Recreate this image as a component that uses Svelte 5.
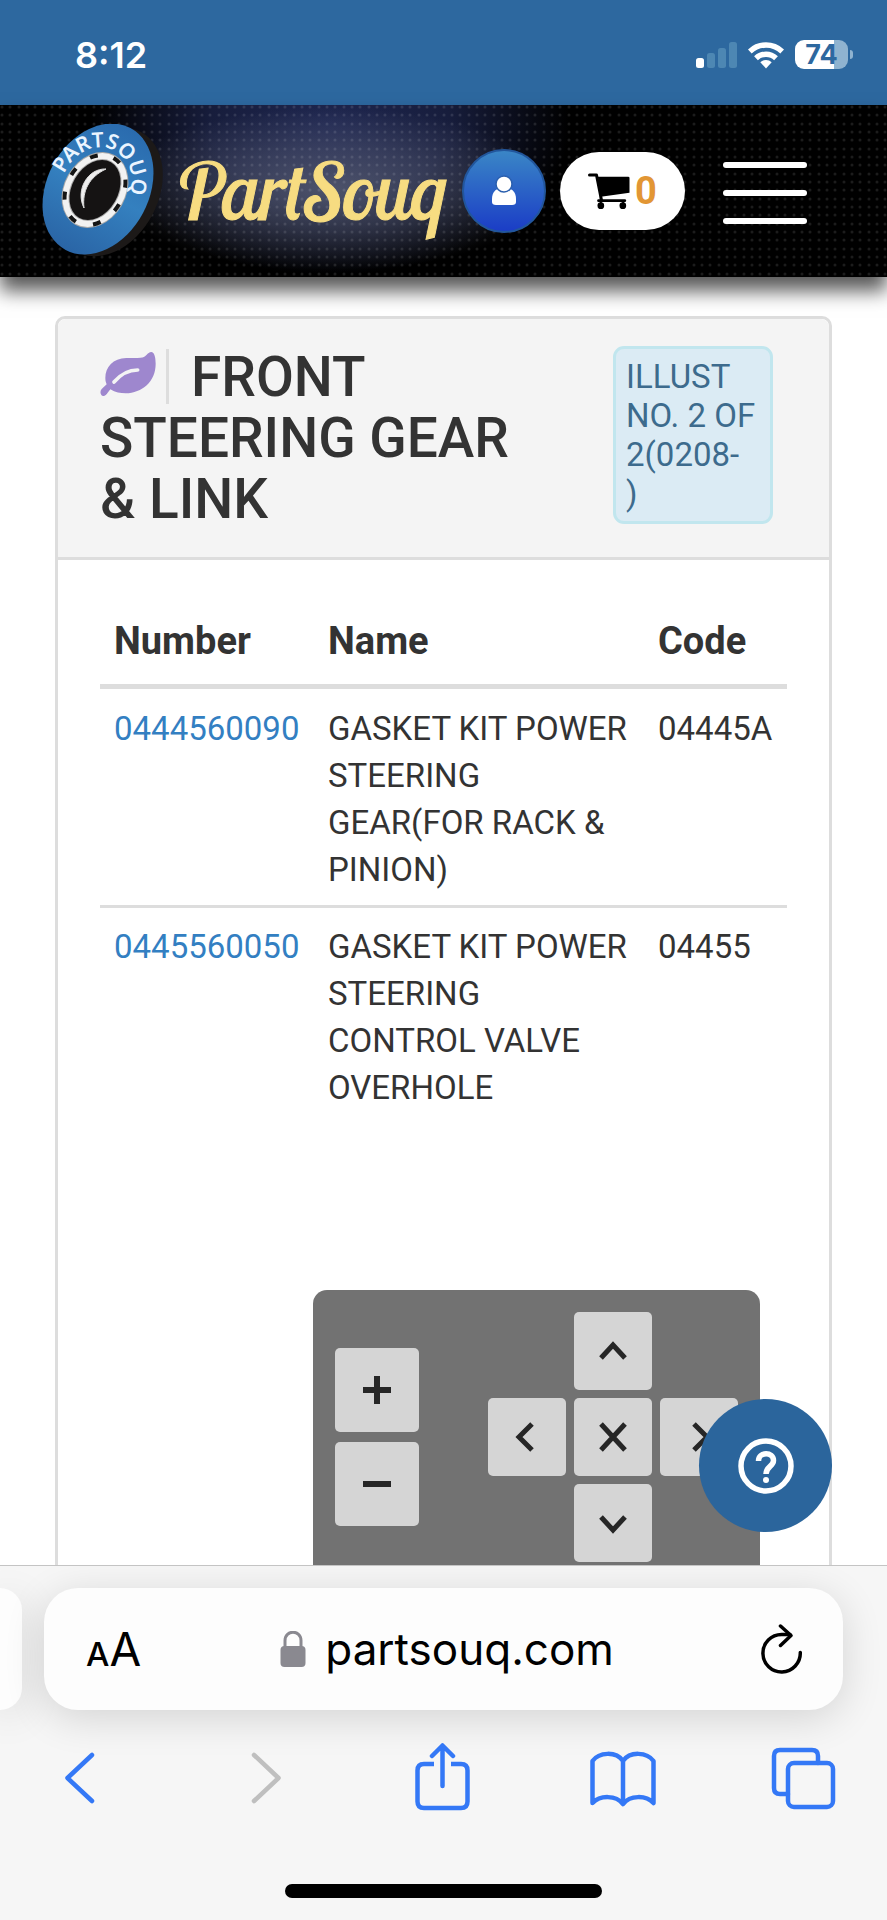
<script>
  const parts = [
    { number: '0444560090', name: 'GASKET KIT POWER STEERING GEAR(FOR RACK & PINION)', code: '04445A' },
    { number: '0445560050', name: 'GASKET KIT POWER STEERING CONTROL VALVE OVERHOLE', code: '04455' }
  ];
  const steps = [4, 12, 21];
</script>

<div class="screen">
  <div class="status">
    <span class="time">8:12</span>
    <div class="indicators">
      <svg width="41" height="26" viewBox="0 0 41 26" aria-hidden="true">
        <rect x="0" y="16" width="8" height="10" rx="2.5" fill="#fff" />
        <g fill="#4d87b3">
          <rect x="11" y="11" width="8" height="15" rx="2.5" />
          <rect x="22" y="6" width="8" height="20" rx="2.5" />
          <rect x="33" y="0" width="8" height="26" rx="2.5" />
        </g>
      </svg>
      <svg width="36" height="28" viewBox="0 0 36 28" aria-hidden="true">
        <g fill="none" stroke="#fff" stroke-width="5.5">
          <path d="M1.8 10.5A23.5 23.5 0 0 1 34.2 10.5" />
          <path d="M8 17.2A14.5 14.5 0 0 1 28 17.2" />
        </g>
        <path d="M12.3 21.2A8.5 8.5 0 0 1 23.7 21.2L18 27.4Z" fill="#fff" />
      </svg>
      <div class="battery"><span class="level">74</span><span class="tip"></span></div>
    </div>
  </div>

  <header class="site">
    <svg class="dots" aria-hidden="true">
      <defs>
        <pattern id="mesh" width="25" height="25" patternUnits="userSpaceOnUse">
          {#each steps as y}
            {#each steps as x}
              <circle cx={x - 2} cy={y - 2} r="1.5" fill="#fff" fill-opacity="0.11" />
            {/each}
          {/each}
        </pattern>
      </defs>
      <rect width="100%" height="100%" fill="url(#mesh)" />
    </svg>
    <a class="brand" href="#home">
      <svg width="124" height="134" viewBox="0 0 124 134" aria-hidden="true">
        <defs>
          <linearGradient id="disc" x1="0" y1="0" x2="1" y2="0">
            <stop offset="0" stop-color="#2a65a6" />
            <stop offset="0.5" stop-color="#3480bf" />
            <stop offset="1" stop-color="#2a6bae" />
          </linearGradient>
          <path id="rim" d="M22 50C34 25 58 17 74 28C91 39 93 56 85 78" />
        </defs>
        <ellipse cx="67" cy="68" rx="68" ry="49" transform="rotate(-62 67 68)" fill="#1c1918" />
        <ellipse cx="56" cy="65" rx="69" ry="51" transform="rotate(-62 56 65)" fill="url(#disc)" />
        <ellipse cx="53" cy="66" rx="40" ry="31" transform="rotate(-60 53 66)" fill="#a9a9a9" />
        <ellipse cx="53" cy="66" rx="36" ry="27" transform="rotate(-60 53 66)" fill="none" stroke="#f2f2f2" stroke-width="6" />
        <ellipse cx="53" cy="66" rx="37" ry="28" transform="rotate(-60 53 66)" fill="none" stroke="#151515" stroke-width="4" stroke-dasharray="8 17.8" />
        <ellipse cx="53" cy="66" rx="32" ry="23" transform="rotate(-60 53 66)" fill="#151313" />
        <path d="M64 45C46 44 33 66 42 84C40 67 47 53 64 45Z" fill="#eee" stroke="#ddd" stroke-width="1" />
        <text class="rimtext"><textPath href="#rim">PARTSOUQ</textPath></text>
      </svg>
      <span class="wordmark">PartSouq</span>
    </a>
    <nav class="actions">
      <button class="user" aria-label="Account">
        <svg width="26" height="32" viewBox="0 0 26 32" aria-hidden="true">
          <path d="M1 24C1 17 5 14 8 14H18C21 14 25 17 25 24V27Q25 30 21 30H5Q1 30 1 27Z" fill="#fff" />
          <circle cx="13" cy="9" r="8" fill="#fff" stroke="#2a5fae" stroke-width="1.5" />
        </svg>
      </button>
      <button class="cart" aria-label="Cart">
        <svg width="42" height="36" viewBox="0 0 125 108" aria-hidden="true">
          <path d="M4 6H25L40 82" fill="none" stroke="#000" stroke-width="9" stroke-linecap="round" stroke-linejoin="round" />
          <path d="M29 11H120Q124 11 124 15V59L38 71Z" />
          <path d="M31 83H110" stroke="#000" stroke-width="8" stroke-linecap="round" />
          <path d="M38 68V98M105 83V98" stroke="#000" stroke-width="6" />
          <circle cx="38" cy="98" r="10" />
          <circle cx="104" cy="98" r="10" />
        </svg>
        <span>0</span>
      </button>
      <button class="menu" aria-label="Menu"><i></i><i></i><i></i></button>
    </nav>
  </header>

  <main>
    <section class="card">
      <div class="cardhead">
        <h1><svg class="leaf" width="56" height="44" viewBox="0 0 166 132" aria-hidden="true"><path d="M145 3C135 9 137 18 112 18H78C38 19 15 45 15 78C15 88 17 92 19 97L4 111C-2 118 0 128 6 131C12 134 18 128 22 122L30 112C45 122 60 124 76 124C125 122 166 90 166 35C166 15 162 5 158 2C155 -1 149 0 145 3Z" fill="#9e87ce" /><path d="M41 90C60 68 80 54 112 54" fill="none" stroke="#f4f4f4" stroke-width="11" stroke-linecap="round" /></svg><span class="bar"></span>FRONT STEERING GEAR &amp; LINK</h1>
        <div class="illust">ILLUST NO. 2 OF 2(0208-<br />)</div>
      </div>
      <div class="cardbody">
        <table>
          <thead>
            <tr><th class="num">Number</th><th>Name</th><th class="code">Code</th></tr>
          </thead>
          <tbody>
            {#each parts as part}
              <tr>
                <td><a href="#{part.number}">{part.number}</a></td>
                <td>{part.name}</td>
                <td>{part.code}</td>
              </tr>
            {/each}
          </tbody>
        </table>
        <div class="viewer">
          <div class="zoom">
            <button aria-label="Zoom in"><svg width="30" height="30" viewBox="0 0 30 30"><path d="M15 1V29M1 15H29" /></svg></button>
            <button aria-label="Zoom out"><svg width="30" height="30" viewBox="0 0 30 30"><path d="M1 15H29" /></svg></button>
          </div>
          <div class="pad">
            <button class="up" aria-label="Up"><svg width="30" height="30" viewBox="0 0 30 30"><path d="M3 22L15 9L27 22" /></svg></button>
            <button class="left" aria-label="Left"><svg width="30" height="30" viewBox="0 0 30 30"><path d="M20 2L7 15L20 28" /></svg></button>
            <button class="reset" aria-label="Reset"><svg width="30" height="30" viewBox="0 0 30 30"><path d="M3 2L27 28M27 2L3 28" /></svg></button>
            <button class="right" aria-label="Right"><svg width="30" height="30" viewBox="0 0 30 30"><path d="M10 2L23 15L10 28" /></svg></button>
            <button class="down" aria-label="Down"><svg width="30" height="30" viewBox="0 0 30 30"><path d="M3 9L15 22L27 9" /></svg></button>
          </div>
        </div>
      </div>
    </section>
    <button class="help" aria-label="Help">
      <svg width="56" height="56" viewBox="0 0 56 56" fill="none" stroke="#fff">
        <circle cx="28" cy="28" r="25" stroke-width="5.5" />
        <path d="M20.5 23C20.5 13.500 35.500 13.500 35.500 22.500C35.500 28.500 28 28.500 28 36" stroke-width="5.500" />
        <circle cx="28" cy="42" r="3" fill="#fff" stroke="none" />
      </svg>
    </button>
  </main>

  <footer>
    <div class="tabs">
      <div class="previous"></div>
      <div class="address">
        <button class="reader" aria-label="Page settings"><small>A</small>A</button>
        <div class="url">
          <svg width="26" height="36" viewBox="0 0 26 36" aria-hidden="true">
            <path d="M5 16V9.500C5 -1.500 21 -1.500 21 9.500V16" fill="none" stroke="#8a8990" stroke-width="3" />
            <rect x="0.500" y="15" width="25" height="21" rx="4" fill="#8a8990" />
          </svg>
          <span>partsouq.com</span>
        </div>
        <button aria-label="Reload">
          <svg width="42" height="50" viewBox="0 0 42 50" fill="none" stroke="#000" stroke-width="3.500" stroke-linecap="round" stroke-linejoin="round">
            <path d="M39.300 28.500A18.700 18.700 0 1 1 20.600 10.500H29" />
            <path d="M19.500 2L30 11.500L19.500 21.500" />
          </svg>
        </button>
      </div>
    </div>
    <nav class="toolbar">
      <button aria-label="Back"><svg viewBox="0 0 66 68"><path d="M46 12L21.500 35L46 58" /></svg></button>
      <button class="off" aria-label="Forward" disabled><svg viewBox="0 0 66 68"><path d="M27 12L51.500 35L27 58" /></svg></button>
      <button aria-label="Share"><svg viewBox="0 0 66 68"><path d="M25 21H15Q8.500 21 8.500 27.500V58.500Q8.500 65 15 65H52Q58.500 65 58.500 58.500V27.500Q58.500 21 52 21H42" stroke-linecap="butt" /><path d="M33.500 43V3M23 13L33.500 2.500L44 13" /></svg></button>
      <button aria-label="Bookmarks"><svg viewBox="0 0 66 68"><path d="M33 61V18C26 8 9 9 2.500 18V60C10 52 26 52 33 61C40 52 56 52 63.500 60V18C57 9 40 8 33 18" /></svg></button>
      <button aria-label="Tabs"><svg viewBox="0 0 66 68"><rect x="17" y="20" width="45" height="44" rx="6" /><path d="M17 51H9Q3 51 3 45V13Q3 7 9 7H41Q47 7 47 13V20" /></svg></button>
    </nav>
    <div class="home"></div>
  </footer>
</div>

<style>
  :global(body) { margin: 0; background: #fff; }
  * { box-sizing: border-box; }
  button { border: 0; padding: 0; margin: 0; background: none; font: inherit; color: inherit; display: flex; align-items: center; justify-content: center; }
  svg { display: block; flex: none; }
  a { text-decoration: none; }

  .screen { height: 100vh; display: flex; flex-direction: column; overflow: hidden; font-family: Roboto, sans-serif; color: #333; }

  .status { flex: none; height: 105px; padding: 4px 34px 0 75px; background: #2d689f; color: #fff; display: flex; align-items: center; justify-content: space-between; font-family: Inter, sans-serif; }
  .time { font-size: 36px; font-weight: 600; }
  .indicators { display: flex; align-items: center; gap: 11px; }
  .battery { position: relative; width: 53px; height: 29px; margin-right: 5px; border-radius: 9px; background: linear-gradient(90deg, #fff 74%, #8fb3d0 74%); color: #2d689f; display: flex; align-items: center; justify-content: center; }
  .level { font-size: 27px; font-weight: 700; line-height: 29px; }
  .tip { position: absolute; left: 55px; top: 10px; width: 3px; height: 9px; border-radius: 0 4px 4px 0; background: #8fb3d0; }

  .site { position: relative; z-index: 2; flex: none; height: 172px; padding: 0 80px 0 42px; display: flex; align-items: center; justify-content: space-between;
    background: radial-gradient(ellipse 220px 82px at 330px 84px, rgba(120, 125, 142, 0.55), rgba(105, 110, 132, 0.36) 50%, transparent), radial-gradient(ellipse 240px 150px at 330px 20px, #1e2650, #171d3c 50%, #000);
    box-shadow: 0 14px 18px rgba(0, 0, 0, 0.65); }
  .dots { position: absolute; inset: 0; width: 100%; height: 100%; }
  .brand { position: relative; display: flex; align-items: center; gap: 10px; color: #f7dc81; }
  .rimtext { font: 600 21px "Noto Sans", sans-serif; fill: #eaf4ff; }
  .wordmark { font: italic 78px "Lobster Two", "Lobster", "Liberation Serif", serif; -webkit-text-stroke: 1px #f7dc81; }
  .actions { position: relative; display: flex; align-items: center; gap: 14px; }
  .user { width: 84px; height: 84px; border-radius: 50%; border: 2px solid #22569c; background: linear-gradient(#3a86c6, #1b3dc6); }
  .cart { width: 125px; height: 78px; border-radius: 39px; background: #fff; color: #e29634; gap: 5px; font-size: 38px; font-weight: 700; }
  .menu { width: 84px; margin: 4px 0 0 24px; flex-direction: column; gap: 22px; }
  .menu i { width: 100%; height: 6px; border-radius: 3px; background: #fff; }

  main { position: relative; flex: 1; min-height: 0; overflow: hidden; padding: 39px 55px 0; }
  .card { border: 3px solid #ddd; border-radius: 10px; background: #fff; }
  .cardhead { display: flex; align-items: flex-start; justify-content: space-between; gap: 80px; padding: 27px 56px 27px 42px; border-bottom: 3px solid #ddd; border-radius: 8px 8px 0 0; background: #f4f4f4; }
  h1 { margin: 0; padding-top: 1px; flex: 1; font-size: 55px; line-height: 61px; font-weight: 500; }
  .leaf { display: inline-block; vertical-align: baseline; }
  .bar { display: inline-block; width: 3px; height: 55px; margin: 0 22px 0 10px; vertical-align: -8px; background: #ddd; }
  .illust { flex: none; width: 160px; padding: 8px 10px; border: 3px solid #c1e6ee; border-radius: 11px; background: #dbebf4; color: #3d6b8d; font-size: 33px; line-height: 39px; }

  .cardbody { padding: 44px 42px; }
  table { width: 100%; border-collapse: separate; border-spacing: 0; table-layout: fixed; font-size: 33px; line-height: 47px; }
  th { padding: 14px 14px 19px; border-bottom: 5px solid #ddd; text-align: left; font-size: 38px; font-weight: 700; }
  .num { width: 214px; }
  .code { width: 143px; }
  td { padding: 16px 14px 12px; vertical-align: top; }
  td:last-child { padding-right: 0; }
  tbody tr + tr td { padding-top: 15px; border-top: 3px solid #ddd; }
  td a { color: #337fc2; }

  .viewer { width: fit-content; margin: 167px 27px 0 auto; padding: 22px; display: flex; align-items: center; gap: 69px; border-radius: 14px; background: #727272; }
  .viewer button { border-radius: 5px; background: #d5d5d5; }
  .viewer path { fill: none; stroke: #262626; stroke-width: 5; }
  .zoom { display: grid; gap: 10px; }
  .zoom button { width: 84px; height: 84px; }
  .zoom path { stroke-width: 6; }
  .pad { display: grid; grid-template: repeat(3, 78px) / repeat(3, 78px); gap: 8px; grid-template-areas: ". up ." "left reset right" ". down ."; }
  .up { grid-area: up; }
  .left { grid-area: left; }
  .reset { grid-area: reset; }
  .right { grid-area: right; }
  .down { grid-area: down; }
  .help { position: absolute; right: 55px; bottom: 33px; width: 133px; height: 133px; border-radius: 50%; background: #2b659c; }

  footer { position: relative; z-index: 1; flex: none; border-top: 1px solid #c4c4c4; background: #f6f6f6; overflow: hidden; font-family: Inter, sans-serif; color: #000; }
  .tabs { display: flex; gap: 22px; padding: 22px 44px 0 0; }
  .previous { width: 22px; height: 122px; border-radius: 0 32px 32px 0; background: #fdfdfd; box-shadow: 0 8px 40px rgba(0, 0, 0, 0.14); }
  .address { flex: 1; height: 122px; padding: 0 40px 0 42px; display: flex; align-items: center; justify-content: space-between; border-radius: 34px; background: #fdfdfd; box-shadow: 0 8px 40px rgba(0, 0, 0, 0.14); }
  .reader { align-items: baseline; font-size: 46px; font-weight: 400; }
  .reader small { font-size: 33px; font-weight: 500; }
  .url { display: flex; align-items: center; gap: 19px; padding-right: 8px; font-size: 44px; }
  .toolbar { display: flex; justify-content: space-between; padding: 33px 50px 0 46px; color: #3478f6; }
  .toolbar svg { width: 66px; height: 68px; fill: none; stroke: currentColor; stroke-width: 4.500; stroke-linecap: round; stroke-linejoin: round; }
  .toolbar .off { color: #bfbfbf; }
  .home { width: 317px; height: 14px; margin: 73px auto 22px; border-radius: 7px; background: #000; }
</style>
